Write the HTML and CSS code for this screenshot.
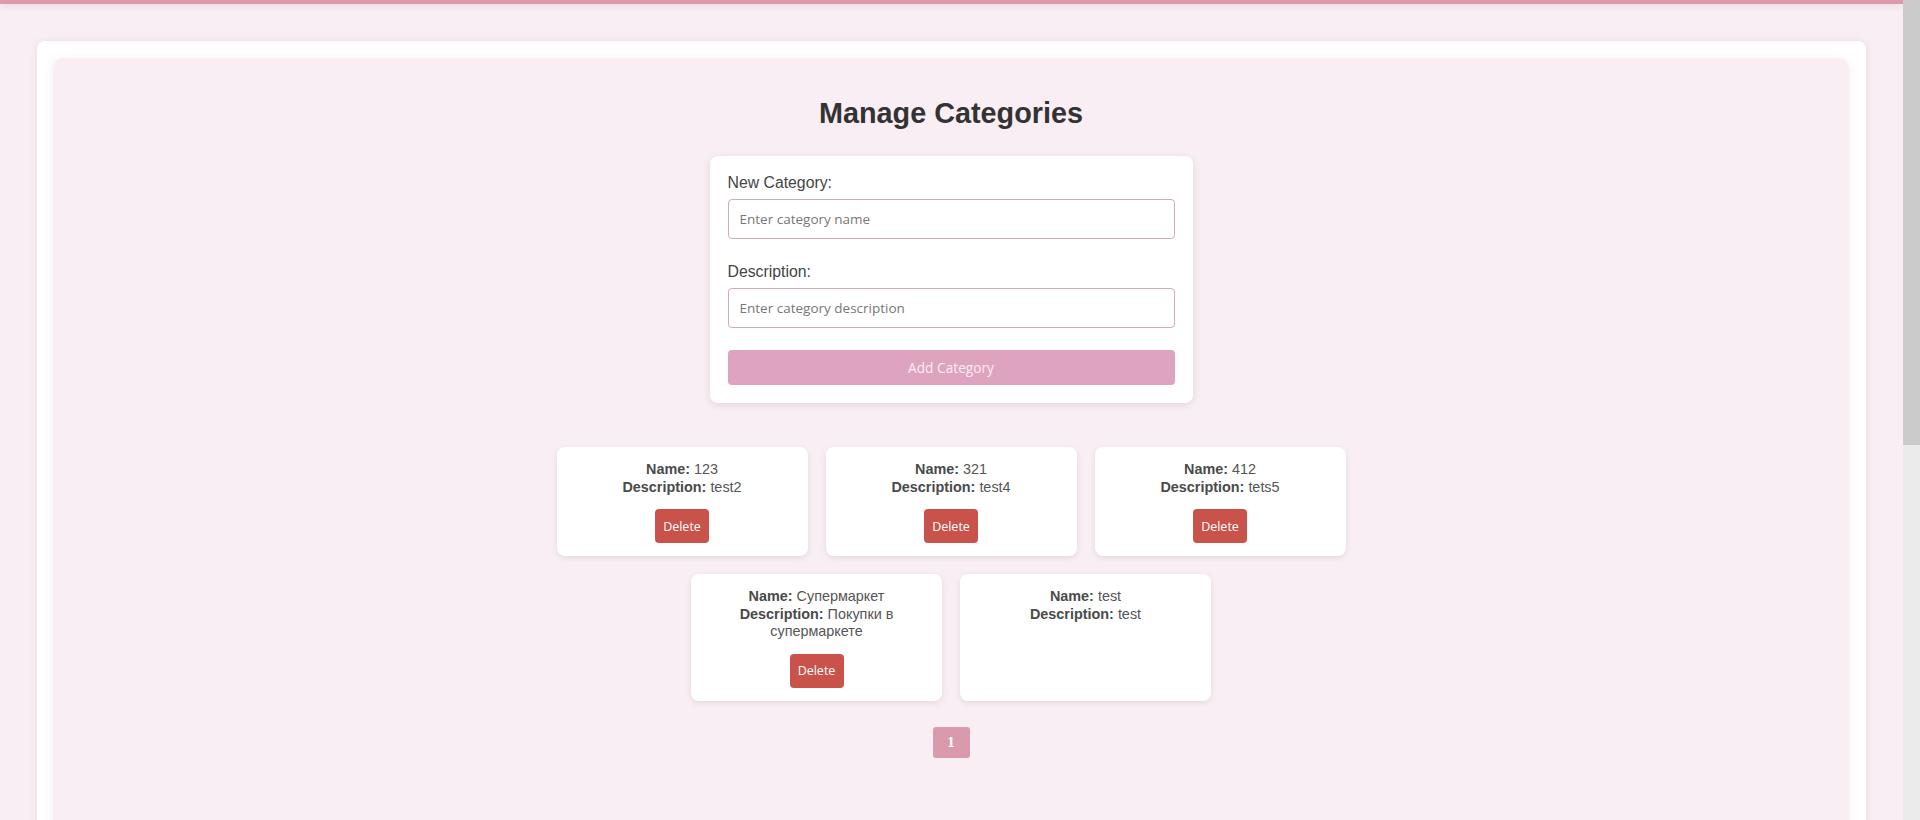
FILE: index.html
```html
<!DOCTYPE html>
<html lang="en">
<head>
<meta charset="utf-8">
<title>Manage Categories</title>
<link rel="stylesheet" href="styles.css">
</head>
<body>
<div class="viewport">
  <div class="page">
    <div class="topbar"></div>
    <div class="shell">
      <div class="panel">
        <h2 class="title">Manage Categories</h2>
        <form class="form-card">
          <div class="field">
            <label class="label" for="cat-name">New Category:</label>
            <input class="input" id="cat-name" type="text" placeholder="Enter category name">
          </div>
          <div class="field field-last">
            <label class="label" for="cat-desc">Description:</label>
            <input class="input" id="cat-desc" type="text" placeholder="Enter category description">
          </div>
          <button class="add-btn" type="button">Add Category</button>
        </form>

        <div class="cards">
          <div class="card">
            <div class="card-text">
              <div><b>Name:</b> <span>123</span></div>
              <div><b>Description:</b> <span>test2</span></div>
            </div>
            <button class="del-btn" type="button">Delete</button>
          </div>
          <div class="card">
            <div class="card-text">
              <div><b>Name:</b> <span>321</span></div>
              <div><b>Description:</b> <span>test4</span></div>
            </div>
            <button class="del-btn" type="button">Delete</button>
          </div>
          <div class="card">
            <div class="card-text">
              <div><b>Name:</b> <span>412</span></div>
              <div><b>Description:</b> <span>tets5</span></div>
            </div>
            <button class="del-btn" type="button">Delete</button>
          </div>
          <div class="card">
            <div class="card-text">
              <div><b>Name:</b> <span>Супермаркет</span></div>
              <div><b>Description:</b> <span>Покупки в</span> <span>супермаркете</span></div>
            </div>
            <button class="del-btn" type="button">Delete</button>
          </div>
          <div class="card">
            <div class="card-text">
              <div><b>Name:</b> <span>test</span></div>
              <div><b>Description:</b> <span>test</span></div>
            </div>
          </div>
        </div>

        <div class="pagination">
          <button class="page-btn" type="button">1</button>
        </div>
      </div>
    </div>
  </div>
  <div class="scrollbar">
    <div class="thumb"></div>
  </div>
</div>
</body>
</html>
```
FILE: styles.css
```css
html, body {
  margin: 0;
  padding: 0;
  height: 820px;
  overflow: hidden;
}

body {
  background: #f9eef3;
  font-family: "Liberation Sans", Arial, sans-serif;
  color: #444;
}

.viewport {
  display: flex;
  height: 820px;
}

.page {
  flex: 1;
  min-width: 0;
  overflow: hidden;
}

.topbar {
  height: 4px;
  background: #dc9aab;
  box-shadow: 0 2px 6px rgba(120, 60, 80, 0.15);
}

.shell {
  margin: 37px 37px 0 37px;
  background: #ffffff;
  border-radius: 8px;
  box-shadow: 0 0 8px rgba(0, 0, 0, 0.08);
  padding: 17px 17px 0 16px;
  height: 1200px;
}

.panel {
  background: #f9eef3;
  border-radius: 10px;
  box-shadow: 0 2px 10px rgba(120, 80, 100, 0.10);
  padding: 39px 20px 40px;
  height: 1100px;
  display: flex;
  flex-direction: column;
  align-items: center;
}

.title {
  margin: 0;
  font-size: 28.8px;
  font-weight: bold;
  color: #333;
  line-height: 32px;
}

.form-card {
  margin-top: 27px;
  width: 447px;
  background: #fff;
  border-radius: 8px;
  box-shadow: 0 2px 8px rgba(0, 0, 0, 0.10);
  padding: 18px 18px 18px;
  display: flex;
  flex-direction: column;
}

.field {
  display: flex;
  flex-direction: column;
  margin-bottom: 24px;
}

.field-last {
  margin-bottom: 22px;
}

.label {
  font-size: 15.8px;
  color: #444;
  line-height: 18px;
  margin-bottom: 7px;
}

.input {
  box-sizing: border-box;
  height: 40px;
  width: 100%;
  border: 1px solid #d3a9bd;
  border-radius: 4px;
  padding: 0 11px;
  font-family: "Open Sans", "Noto Sans", sans-serif;
  font-size: 13.5px;
  color: #333;
  background: #fff;
  outline: none;
}

.input::placeholder {
  color: #777;
}

.add-btn {
  height: 35px;
  border: none;
  border-radius: 4px;
  background: #dda3bf;
  color: #fbeef4;
  font-family: "Open Sans", "Noto Sans", sans-serif;
  font-size: 13.7px;
  padding: 0;
}

.cards {
  margin-top: 44px;
  width: 800px;
  display: flex;
  flex-wrap: wrap;
  justify-content: center;
  gap: 18px;
}

.card {
  box-sizing: border-box;
  width: 251px;
  background: #fff;
  border-radius: 8px;
  box-shadow: 0 2px 6px rgba(0, 0, 0, 0.09);
  padding: 14px 15px 13px;
  display: flex;
  flex-direction: column;
  align-items: center;
  text-align: center;
}

.card-text {
  font-size: 14.4px;
  line-height: 17.5px;
  color: #555;
}

.card-text b {
  color: #4a4a4a;
}

.del-btn {
  margin-top: 13px;
  height: 34px;
  width: 54px;
  padding: 0;
  border: none;
  border-radius: 4px;
  background: #c9524a;
  color: #fff;
  font-family: "Open Sans", "Noto Sans", sans-serif;
  font-size: 12.5px;
}

.pagination {
  margin-top: 26px;
  display: flex;
  justify-content: center;
}

.page-btn {
  width: 37px;
  height: 31px;
  border: none;
  border-radius: 3px;
  background: #d99aae;
  color: #fff;
  font-family: "Liberation Serif", "Times New Roman", serif;
  font-weight: bold;
  font-size: 15px;
  padding: 0;
}

.scrollbar {
  width: 17px;
  flex: none;
  background: #ebebeb;
  display: flex;
  flex-direction: column;
}

.thumb {
  height: 445px;
  background: #cbcbcb;
}
```
